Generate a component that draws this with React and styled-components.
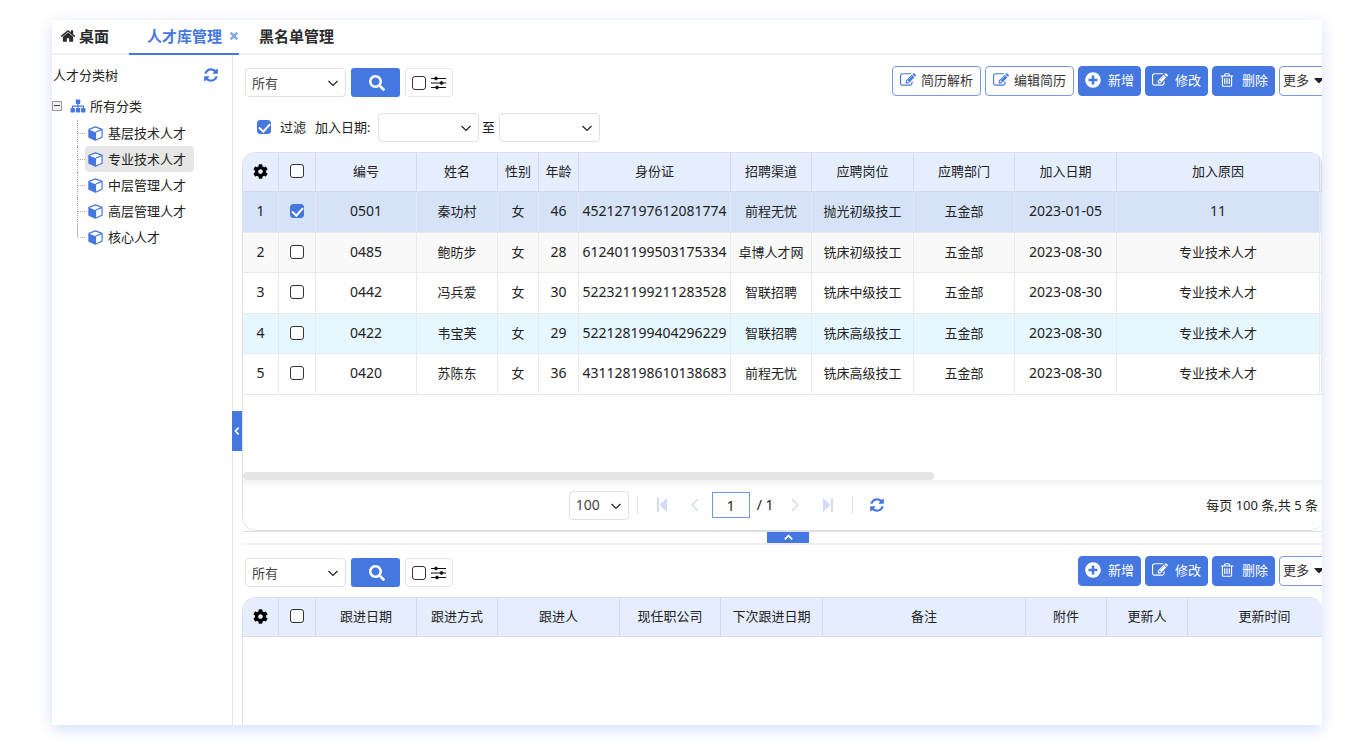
import React, { useState } from "react"
import styled, { createGlobalStyle, css } from "styled-components"
import { FaSearch, FaCog, FaPlusCircle, FaCaretDown } from "react-icons/fa"

const GlobalStyle = createGlobalStyle`
  * {
    box-sizing: border-box;
  }
  body {
    margin: 0;
    background: #fff;
    color: #222;
    font-family: "Noto Sans", "Noto Sans CJK SC", sans-serif;
    font-size: 13px;
    line-height: 20px;
  }
  button, input, select {
    font: inherit;
    color: inherit;
    margin: 0;
  }
  svg {
    display: block;
    flex-shrink: 0;
  }
`

const blue = "#4577e0"

const Shell = styled.div`
  display: flex;
  flex-direction: column;
  margin: 20px 28px 25px 52px;
  min-height: calc(100vh - 45px);
  background: #fff;
  box-shadow: 0 4px 14px rgba(69, 119, 224, 0.24);
  overflow: hidden;
`

const Tabs = styled.nav`
  display: flex;
  height: 35px;
  border-bottom: 2px solid #eef1f9;
`

const Tab = styled.a`
  display: flex;
  align-items: center;
  gap: 3px;
  height: 35px;
  padding: 0 20px 3px 8px;
  font-size: 15px;
  font-weight: 700;
  color: #2b2b2b;
  text-decoration: none;
  ${({ $active }) =>
    $active &&
    css`
      gap: 7px;
      padding: 0 0 1px 18px;
      margin-right: 12px;
      color: ${blue};
      border-bottom: 2px solid ${blue};
    `}
`

const Close = styled.button`
  display: flex;
  padding: 0;
  border: 0;
  background: none;
  color: #85a6ea;
`

const Body = styled.div`
  display: flex;
  flex: 1;
`

const Sidebar = styled.aside`
  width: 180px;
  flex-shrink: 0;
`

const SideTitle = styled.div`
  display: flex;
  align-items: center;
  justify-content: space-between;
  height: 38px;
  padding: 2px 13px 0 1px;
`

const IconButton = styled.button`
  display: flex;
  padding: 0;
  border: 0;
  background: none;
  color: ${({ $muted }) => ($muted ? "#cfdcf8" : blue)};
`

const RootNode = styled.div`
  display: flex;
  align-items: center;
  gap: 4px;
  height: 27px;
  padding-bottom: 2px;
  svg {
    color: ${blue};
  }
`

const Toggle = styled.button`
  width: 10px;
  height: 10px;
  margin-right: 4px;
  padding: 0;
  border: 1px solid #9a9a9a;
  background: linear-gradient(#444, #444) center / 6px 1px no-repeat #eee;
`

const Tree = styled.ul`
  list-style: none;
  margin: 0 0 0 25px;
  padding: 0;
`

const Branch = styled.li`
  display: flex;
  align-items: center;
  height: 26px;
  border-left: 1px dotted #aaa;
  &::before {
    content: "";
    width: 7px;
    border-top: 1px dotted #aaa;
  }
  &:last-child {
    border-image: linear-gradient(#bbb 50%, transparent 50%) 1;
  }
`

const Leaf = styled.a`
  display: flex;
  align-items: center;
  gap: 5px;
  height: 26px;
  padding: 0 8px 0 3px;
  border-radius: 4px;
  color: #222;
  text-decoration: none;
  background: ${({ $active }) => ($active ? "#e6e6e6" : "transparent")};
  svg {
    color: ${blue};
  }
`

const Splitter = styled.div`
  display: flex;
  align-items: center;
  width: 10px;
  flex-shrink: 0;
  padding-top: 82px;
  box-shadow: inset 1px 0 #e4e5ec;
`

const Handle = styled.button`
  display: flex;
  align-items: center;
  justify-content: center;
  width: ${({ $wide }) => ($wide ? "42px" : "10px")};
  height: ${({ $wide }) => ($wide ? "11px" : "40px")};
  padding: 0;
  border: 0;
  background: ${blue};
  color: #fff;
`

const Main = styled.main`
  display: flex;
  flex-direction: column;
  flex: 1;
  min-width: 0;
`

const Upper = styled.section`
  display: flex;
  flex-direction: column;
  flex: 1;
`

const Lower = styled.section`
  min-height: 182px;
  border-top: 2px solid #f0f1f7;
`

const Toolbar = styled.div`
  display: flex;
  justify-content: space-between;
  padding: 11px 0 0 3px;
  overflow: hidden;
`

const Tools = styled.div`
  display: flex;
  gap: 5px;
  padding-top: 2px;
`

const Actions = styled.div`
  display: flex;
  gap: 4px;
  margin-right: -14px;
`

const Filter = styled.div`
  display: flex;
  align-items: center;
  height: 28px;
  margin: 16px 0 11px;
  padding-left: 15px;
`

const CheckLabel = styled.label`
  display: flex;
  align-items: center;
  gap: 9px;
  margin-right: 9px;
`

const DateLabel = styled.label`
  margin-right: 7px;
`

const To = styled.span`
  width: 20px;
  text-align: center;
`

const SelectBox = styled.div`
  position: relative;
  width: ${({ $narrow }) => ($narrow ? "60px" : "101px")};
  svg {
    position: absolute;
    right: 7px;
    top: 9px;
    pointer-events: none;
  }
`

const Select = styled.select`
  display: block;
  width: 100%;
  height: 29px;
  padding: 0 6px;
  appearance: none;
  border: 1px solid #dfe0e8;
  border-radius: 4px;
  background: #fff;
  color: #444;
  font-size: ${({ $number }) => ($number ? "14px" : "13px")};
`

const SearchButton = styled.button`
  display: flex;
  align-items: center;
  justify-content: center;
  width: 49px;
  height: 29px;
  padding: 0 0 0 3px;
  border: 0;
  border-radius: 3px;
  background: ${blue};
  color: #fff;
`

const Options = styled.label`
  display: flex;
  align-items: center;
  gap: 5px;
  height: 29px;
  padding: 0 6px;
  border: 1px solid #e4e5ec;
  border-radius: 4px;
`

const Check = styled.input.attrs({ type: "checkbox" })`
  display: grid;
  place-content: center;
  width: 14px;
  height: 14px;
  appearance: none;
  border: 1px solid #333;
  border-radius: 3px;
  background: #fff;
  &:checked {
    border-color: ${blue};
    background: ${blue};
  }
  &:checked::after {
    content: "";
    width: 5px;
    height: 9px;
    border: solid #fff;
    border-width: 0 2px 2px 0;
    transform: translateY(-1px) rotate(42deg);
  }
`

const Action = styled.button`
  display: flex;
  align-items: center;
  gap: 5px;
  height: 30px;
  padding: 0 7px 2px;
  border: 1px solid #7899e6;
  border-radius: 4px;
  background: #fff;
  color: #333;
  white-space: nowrap;
  svg {
    color: ${blue};
  }
  ${({ $primary }) =>
    $primary &&
    css`
      gap: 7px;
      padding: 0 6px 2px;
      border-color: ${blue};
      background: ${blue};
      color: #fff;
      svg {
        color: #fff;
      }
    `}
`

const More = styled(Action)`
  gap: 2px;
  padding: 0 8px 2px 3px;
  svg {
    color: #222;
  }
`

const GridBox = styled.div`
  display: flex;
  flex-direction: column;
  flex: 1;
  overflow: hidden;
  border: 1px solid #dcdfe8;
  border-width: 1px 0 ${({ $last }) => ($last ? "0" : "1px")} 1px;
  border-radius: ${({ $last }) => ($last ? "14px 12px 0 0" : "14px 12px 12px 14px")};
`

const LowerGrid = styled(GridBox)`
  margin-top: 10px;
  min-height: 128px;
`

const Table = styled.table`
  width: ${({ $width }) => $width || "100%"};
  table-layout: fixed;
  border-collapse: separate;
  border-spacing: 0;
`

const Th = styled.th`
  height: 39px;
  padding: 0 0 2px;
  border: solid #d5dae6;
  border-width: 0 1px 1px 0;
  background: #e5eefe;
  font-weight: 400;
  text-align: center;
  white-space: nowrap;
  svg,
  input {
    margin: 0 auto;
    color: #000;
  }
`

const Td = styled.td`
  height: 40px;
  padding: 0 0 2px;
  border: solid #e9e8ee;
  border-width: 0 1px 1px 0;
  font-size: ${({ $number }) => ($number ? "14px" : "13px")};
  text-align: center;
  white-space: nowrap;
  input {
    margin: 0 auto;
  }
`

const rowColors = {
  selected: "#d5e2f8",
  striped: "#faf9f9",
  hover: "#e6f7ff",
}

const Tr = styled.tr`
  background: ${({ $state }) => rowColors[$state] || "#fff"};
  &:nth-child(odd) td {
    height: 41px;
  }
`

const ScrollBar = styled.div`
  margin-top: auto;
`

const Thumb = styled.div`
  width: 64%;
  height: 8px;
  border-radius: 4px;
  background: #e4e4e4;
`

const Pager = styled.div`
  display: flex;
  align-items: center;
  height: 50px;
  padding-right: 4px;
  background: linear-gradient(#f3f2f3, #fff 8px);
`

const Pages = styled.div`
  display: flex;
  align-items: center;
  justify-content: center;
  flex: 1;
  padding-left: 4px;
  font-size: 14px;
`

const Rule = styled.span`
  width: 1px;
  height: 18px;
  margin: 0 8px;
  background: #dfe0e8;
`

const PageButtons = styled.div`
  display: flex;
  align-items: center;
  gap: 20px;
  margin: 0 10px;
`

const NextButtons = styled(PageButtons)`
  margin-left: 14px;
`

const Reload = styled(IconButton)`
  margin-left: 8px;
`

const PageInput = styled.input`
  width: 38px;
  height: 26px;
  margin-right: 7px;
  padding: 0;
  border: 1px solid #6f94e8;
  background: #fff;
  text-align: center;
`

const Gutter = styled.div`
  display: flex;
  justify-content: center;
  height: 12px;
  padding-left: 12px;
  border-top: 1px solid #dcdfe8;
`

// 1792-unit glyphs
const glyphs = {
  edit:
    "M888 1184l116-116-152-152-116 116v56h96v96h56zm440-720q-16-16-33 1l-350 350q-17 17-1 33t33-1l350-350q17-17 1-33zm80 594v190q0 119-84.5 203.5t-203.5 84.5h-832q-119 0-203.5-84.5t-84.5-203.5v-832q0-119 84.5-203.5t203.5-84.5h832q63 0 117 25 15 7 18 23 3 17-9 29l-49 49q-14 14-32 8-23-6-45-6h-832q-66 0-113 47t-47 113v832q0 66 47 113t113 47h832q66 0 113-47t47-113v-126q0-13 9-22l64-64q15-15 35-7t20 29zm-96-738l288 288-672 672h-288v-288zm444 132l-92 92-288-288 92-92q28-28 68-28t68 28l152 152q28 28 28 68t-28 68z",
  refresh:
    "M1639 1056q0 5-1 7-64 268-268 434.5t-478 166.5q-146 0-282.5-55t-243.5-157l-129 129q-19 19-45 19t-45-19-19-45v-448q0-26 19-45t45-19h448q26 0 45 19t19 45-19 45l-137 137q71 66 161 102t187 36q134 0 250-65t186-179q11-17 53-117 8-23 30-23h192q13 0 22.5 9.5t9.5 22.5zm25-800v448q0 26-19 45t-45 19h-448q-26 0-45-19t-19-45 19-45l138-138q-148-137-349-137-134 0-250 65t-186 179q-11 17-53 117-8 23-30 23h-199q-13 0-22.5-9.5t-9.5-22.5v-7q65-268 270-434.5t480-166.5q146 0 284 55.5t245 156.5l130-129q19-19 45-19t45 19 19 45z",
  trash:
    "M704 736v576q0 14-9 23t-23 9h-64q-14 0-23-9t-9-23v-576q0-14 9-23t23-9h64q14 0 23 9t9 23zm256 0v576q0 14-9 23t-23 9h-64q-14 0-23-9t-9-23v-576q0-14 9-23t23-9h64q14 0 23 9t9 23zm256 0v576q0 14-9 23t-23 9h-64q-14 0-23-9t-9-23v-576q0-14 9-23t23-9h64q14 0 23 9t9 23zm128 724v-948h-896v948q0 22 7 40.5t14.5 27 10.5 8.5h832q3 0 10.5-8.5t14.5-27 7-40.5zm-672-1076h448l-48-117q-7-9-17-11h-317q-10 2-17 11zm928 32v64q0 14-9 23t-23 9h-96v948q0 83-47 143.5t-113 60.5h-832q-66 0-113-58.5t-47-141.5v-952h-96q-14 0-23-9t-9-23v-64q0-14 9-23t23-9h309l70-167q15-37 54-63t79-26h320q40 0 79 26t54 63l70 167h309q14 0 23 9t9 23z",
  home:
    "M1472 992v480q0 26-19 45t-45 19h-384v-384h-256v384h-384q-26 0-45-19t-19-45v-480q0-1 .5-3t.5-3l575-474 575 474q1 2 1 6zm223-69l-62 74q-8 9-21 11h-3q-13 0-21-7l-692-577-692 577q-12 8-24 7-13-2-21-11l-62-74q-8-10-7-23.5t11-21.5l719-599q32-26 76-26t76 26l244 204v-195q0-14 9-23t23-9h192q14 0 23 9t9 23v408l219 182q10 8 11 21.5t-7 23.5z",
}

const Glyph = ({ name, size = 16 }) => (
  <svg width={size} height={size} viewBox="0 0 1792 1792" fill="currentColor" aria-hidden="true">
    <path d={glyphs[name]} />
  </svg>
)

const Chevron = ({ d = "M1.5 4L6 8.5L10.5 4", size = 12, width = 1.2 }) => (
  <svg width={size} height={size} viewBox="0 0 12 12" fill="none" stroke="currentColor" strokeWidth={width} aria-hidden="true">
    <path d={d} />
  </svg>
)

const Sitemap = () => (
  <svg width="16" height="14" viewBox="0 0 16 14" aria-hidden="true">
    <path d="M8 4V10M2.6 10V7.2H13.4V10" fill="none" stroke="currentColor" strokeWidth="1.2" />
    <g fill="currentColor">
      <rect x="5.8" y="0.5" width="4.4" height="4.4" rx="0.7" />
      <rect x="0.5" y="9" width="4.4" height="4.4" rx="0.7" />
      <rect x="5.8" y="9" width="4.4" height="4.4" rx="0.7" />
      <rect x="11.1" y="9" width="4.4" height="4.4" rx="0.7" />
    </g>
  </svg>
)

const Cube = () => (
  <svg width="15" height="15" viewBox="0 0 16 16" aria-hidden="true">
    <path d="M8 1L15 3.6V12L8 15.2L1 12V3.6Z" fill="#fff" stroke="currentColor" strokeWidth="1.3" strokeLinejoin="round" />
    <path d="M1 3.6L8 6.6V15.2L1 12Z" fill="currentColor" />
    <path d="M8 6.6L15 3.6M8 6.6V15.2" stroke="currentColor" strokeWidth="1.2" />
  </svg>
)

const Sliders = () => (
  <svg width="15" height="14" viewBox="0 0 15 14" stroke="#111" fill="#111" aria-hidden="true">
    <path d="M0 2.5H15M0 7H15M0 11.5H15" strokeWidth="1.2" />
    <circle cx="5" cy="2.5" r="1.4" />
    <circle cx="10.5" cy="7" r="1.4" />
    <circle cx="6" cy="11.5" r="1.4" />
  </svg>
)

const Skip = ({ flip }) => (
  <svg width="12" height="14" viewBox="0 0 12 14" aria-hidden="true">
    <g fill="currentColor" transform={flip ? "translate(12 0) scale(-1 1)" : undefined}>
      <path d="M1 0H3V14H1Z" />
      <path d="M11 0V14L3.5 7Z" />
    </g>
  </svg>
)

const Dropdown = ({ options = [""], narrow, label, id }) => (
  <SelectBox $narrow={narrow}>
    <Select id={id} aria-label={label} $number={narrow}>
      {options.map(option => (
        <option key={option}>{option}</option>
      ))}
    </Select>
    <Chevron />
  </SelectBox>
)

const SearchTools = () => (
  <Tools>
    <Dropdown options={["所有"]} label="查询范围" />
    <SearchButton aria-label="查询">
      <FaSearch size={16} />
    </SearchButton>
    <Options>
      <Check aria-label="高级查询" />
      <Sliders />
    </Options>
  </Tools>
)

const EditActions = () => (
  <>
    <Action $primary>
      <FaPlusCircle size={16} />
      新增
    </Action>
    <Action $primary>
      <Glyph name="edit" />
      修改
    </Action>
    <Action $primary>
      <Glyph name="trash" />
      删除
    </Action>
    <More>
      更多
      <FaCaretDown size={16} />
    </More>
  </>
)

const Head = ({ columns }) => (
  <>
    <colgroup>
      <col width="36" />
      <col width="37" />
      {columns.map(([title, width]) => (
        <col key={title} width={width} />
      ))}
    </colgroup>
    <thead>
      <tr>
        <Th>
          <FaCog size={15} />
        </Th>
        <Th>
          <Check aria-label="全选" />
        </Th>
        {columns.map(([title]) => (
          <Th key={title}>{title}</Th>
        ))}
      </tr>
    </thead>
  </>
)

const categories = ["基层技术人才", "专业技术人才", "中层管理人才", "高层管理人才", "核心人才"]

const talentColumns = [
  ["编号", 101],
  ["姓名", 81],
  ["性别", 41],
  ["年龄", 40],
  ["身份证", 152],
  ["招聘渠道", 81],
  ["应聘岗位", 102],
  ["应聘部门", 101],
  ["加入日期", 102],
  ["加入原因", 203],
  ["", undefined],
]

const followColumns = [
  ["跟进日期", 101],
  ["跟进方式", 81],
  ["跟进人", 122],
  ["现任职公司", 101],
  ["下次跟进日期", 102],
  ["备注", 203],
  ["附件", 81],
  ["更新人", 81],
  ["更新时间", 154],
]

const talents = [
  ["0501", "秦功村", "女", "46", "452127197612081774", "前程无忧", "抛光初级技工", "五金部", "2023-01-05", "11"],
  ["0485", "鲍昉步", "女", "28", "612401199503175334", "卓博人才网", "铣床初级技工", "五金部", "2023-08-30", "专业技术人才"],
  ["0442", "冯兵爱", "女", "30", "522321199211283528", "智联招聘", "铣床中级技工", "五金部", "2023-08-30", "专业技术人才"],
  ["0422", "韦宝芙", "女", "29", "522128199404296229", "智联招聘", "铣床高级技工", "五金部", "2023-08-30", "专业技术人才"],
  ["0420", "苏陈东", "女", "36", "431128198610138683", "前程无忧", "铣床高级技工", "五金部", "2023-08-30", "专业技术人才"],
]

const rowStates = ["selected", "striped", "", "hover", ""]

const isNumber = value => /^[\d-]+$/.test(value)

export default () => {
  const [checked, setChecked] = useState([0])

  const toggle = index =>
    setChecked(checked.includes(index) ? checked.filter(i => i !== index) : [...checked, index])

  return (
    <>
      <GlobalStyle />
      <Shell>
        <Tabs>
          <Tab href="#">
            <Glyph name="home" />
            桌面
          </Tab>
          <Tab href="#" $active>
            人才库管理
            <Close aria-label="关闭">
              <Chevron d="M2 2L10 10M10 2L2 10" size={10} width={3} />
            </Close>
          </Tab>
          <Tab href="#">黑名单管理</Tab>
        </Tabs>
        <Body>
          <Sidebar>
            <SideTitle>
              人才分类树
              <IconButton aria-label="刷新">
                <Glyph name="refresh" />
              </IconButton>
            </SideTitle>
            <RootNode>
              <Toggle aria-label="折叠" />
              <Sitemap />
              所有分类
            </RootNode>
            <Tree>
              {categories.map((name, index) => (
                <Branch key={name}>
                  <Leaf href="#" $active={index === 1}>
                    <Cube />
                    {name}
                  </Leaf>
                </Branch>
              ))}
            </Tree>
          </Sidebar>
          <Splitter>
            <Handle aria-label="收起分类">
              <Chevron d="M8 2L4 6L8 10" size={10} width={2} />
            </Handle>
          </Splitter>
          <Main>
            <Upper>
              <Toolbar>
                <SearchTools />
                <Actions>
                  <Action>
                    <Glyph name="edit" />
                    简历解析
                  </Action>
                  <Action>
                    <Glyph name="edit" />
                    编辑简历
                  </Action>
                  <EditActions />
                </Actions>
              </Toolbar>
              <Filter>
                <CheckLabel>
                  <Check defaultChecked />
                  过滤
                </CheckLabel>
                <DateLabel htmlFor="date-from">加入日期:</DateLabel>
                <Dropdown id="date-from" />
                <To>至</To>
                <Dropdown label="结束日期" />
              </Filter>
              <GridBox>
                <Table>
                  <Head columns={talentColumns} />
                  <tbody>
                    {talents.map((row, index) => (
                      <Tr key={row[0]} $state={rowStates[index]}>
                        <Td $number>{index + 1}</Td>
                        <Td>
                          <Check
                            aria-label={row[1]}
                            checked={checked.includes(index)}
                            onChange={() => toggle(index)}
                          />
                        </Td>
                        {row.map((value, i) => (
                          <Td key={i} $number={isNumber(value)}>
                            {value}
                          </Td>
                        ))}
                        <Td />
                      </Tr>
                    ))}
                  </tbody>
                </Table>
                <ScrollBar>
                  <Thumb />
                </ScrollBar>
                <Pager>
                  <Pages>
                    <Dropdown options={["100"]} narrow label="每页条数" />
                    <Rule />
                    <PageButtons>
                      <IconButton $muted aria-label="首页">
                        <Skip />
                      </IconButton>
                      <IconButton $muted aria-label="上一页">
                        <Chevron d="M8.5 1L3.5 6L8.5 11" size={14} />
                      </IconButton>
                    </PageButtons>
                    <PageInput aria-label="页码" defaultValue="1" />
                    / 1
                    <NextButtons>
                      <IconButton $muted aria-label="下一页">
                        <Chevron d="M3.5 1L8.5 6L3.5 11" size={14} />
                      </IconButton>
                      <IconButton $muted aria-label="末页">
                        <Skip flip />
                      </IconButton>
                    </NextButtons>
                    <Rule />
                    <Reload aria-label="刷新列表">
                      <Glyph name="refresh" />
                    </Reload>
                  </Pages>
                  <span>每页 100 条,共 5 条</span>
                </Pager>
              </GridBox>
            </Upper>
            <Gutter>
              <Handle $wide aria-label="收起明细">
                <Chevron d="M2 8L6 4L10 8" size={11} width={2} />
              </Handle>
            </Gutter>
            <Lower>
              <Toolbar>
                <SearchTools />
                <Actions>
                  <EditActions />
                </Actions>
              </Toolbar>
              <LowerGrid $last>
                <Table $width="1099px">
                  <Head columns={followColumns} />
                </Table>
              </LowerGrid>
            </Lower>
          </Main>
        </Body>
      </Shell>
    </>
  )
}
